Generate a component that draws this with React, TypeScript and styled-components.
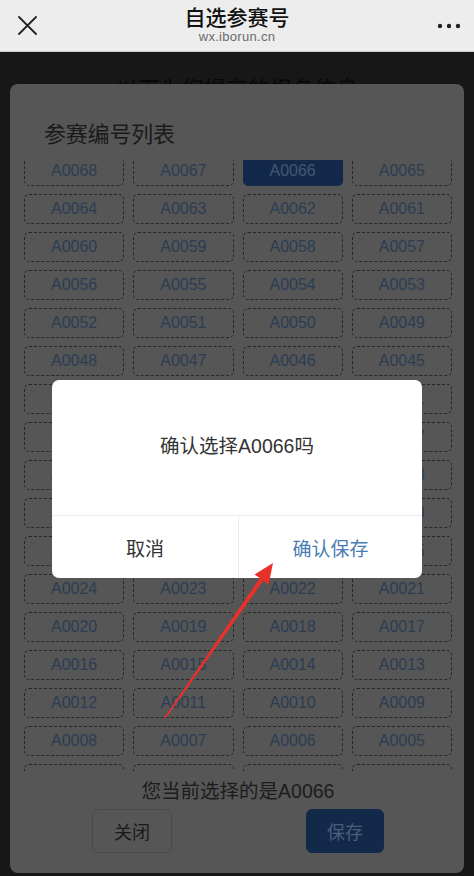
import React from 'react';
import styled, { createGlobalStyle } from 'styled-components';

const GlobalStyle = createGlobalStyle`
    html, body {
        margin: 0;
        padding: 0;
        height: 100%;
        background: #171717;
    }
    body {
        font-family: "Liberation Sans", "Noto Sans CJK SC", sans-serif;
    }
    #root {
        height: 100%;
    }
`;

const Page = styled.div`
    width: 474px;
    height: 876px;
    display: flex;
    flex-direction: column;
    overflow: hidden;
    position: relative;
`;

/* WeChat style top bar */
const TopBar = styled.div`
    height: 51px;
    flex: none;
    background: #ededed;
    border-bottom: 1px solid #c9c9c9;
    display: grid;
    grid-template-columns: 60px 1fr 60px;
    align-items: center;
`;

const BarButton = styled.div<{ $align: 'left' | 'right' }>`
    display: flex;
    justify-content: ${p => (p.$align === 'left' ? 'flex-start' : 'flex-end')};
    padding: ${p => (p.$align === 'left' ? '0 0 0 18px' : '0 13px 0 0')};
`;

const TitleBlock = styled.div`
    display: flex;
    flex-direction: column;
    align-items: center;
`;

const PageTitle = styled.div`
    font-family: "Noto Sans CJK SC", sans-serif;
    font-size: 21px;
    font-weight: 500;
    line-height: 26px;
    color: #111;
    margin-top: -4px;
`;

const PageHost = styled.div`
    font-size: 13px;
    line-height: 15px;
    color: #6a6a6a;
    letter-spacing: 0.3px;
`;

/* everything below the bar, dimmed by the open modals */
const Stage = styled.div`
    flex: 1;
    position: relative;
    background: #171717;
    padding-top: 20px;
`;

const BehindText = styled.div`
    text-align: center;
    font-family: "Noto Sans CJK SC", sans-serif;
    font-size: 22px;
    line-height: 30px;
    color: #070707;
`;

const ListPanel = styled.div`
    position: absolute;
    left: 10px;
    right: 10px;
    top: 32px;
    height: 789px;
    background: #565656;
    border-radius: 8px;
    padding: 33px 12px 0 14px;
    box-sizing: border-box;
    display: flex;
    flex-direction: column;
`;

const PanelTitle = styled.div`
    font-family: "Noto Sans CJK SC", sans-serif;
    font-size: 22px;
    line-height: 30px;
    color: #1a1a1a;
    padding-left: 20px;
    letter-spacing: -0.2px;
`;

const ScrollArea = styled.div`
    margin-top: 13px;
    height: 611px;
    overflow: hidden;
`;

/* list is scrolled a few pixels down */
const NumberGrid = styled.div`
    margin-top: -4px;
    display: grid;
    grid-template-columns: repeat(4, 1fr);
    column-gap: 9px;
    row-gap: 8px;
`;

const NumberCell = styled.div<{ $selected?: boolean }>`
    height: 30px;
    box-sizing: border-box;
    border-radius: 5px;
    border: 1px ${p => (p.$selected ? 'solid #13294a' : 'dashed #262626')};
    background: ${p => (p.$selected ? '#13294a' : 'transparent')};
    color: ${p => (p.$selected ? '#415873' : '#2c3d53')};
    font-size: 16px;
    display: flex;
    align-items: center;
    justify-content: center;
`;

const CurrentChoice = styled.div`
    margin-top: 8px;
    text-align: center;
    font-size: 19.5px;
    line-height: 24px;
    color: #1c1c1c;
`;

const ButtonRow = styled.div`
    margin-top: 6px;
    display: flex;
    justify-content: space-between;
    padding: 0 68px 0 68px;
`;

const PanelButton = styled.div<{ $primary?: boolean }>`
    width: ${p => (p.$primary ? '78px' : '80px')};
    height: 44px;
    box-sizing: border-box;
    border-radius: 6px;
    border: 1px solid ${p => (p.$primary ? '#13294a' : '#4b4b4b')};
    background: ${p => (p.$primary ? '#13294a' : 'transparent')};
    color: ${p => (p.$primary ? '#4a5f7a' : '#1a1a1a')};
    font-family: "Noto Sans CJK SC", sans-serif;
    font-size: 18px;
    display: flex;
    align-items: center;
    justify-content: center;
`;

/* confirm dialog on top of the list */
const ConfirmBox = styled.div`
    position: absolute;
    left: 52px;
    top: 328px;
    width: 370px;
    height: 198px;
    background: #fff;
    border-radius: 7px;
    display: flex;
    flex-direction: column;
    overflow: hidden;
`;

const ConfirmMessage = styled.div`
    height: 136px;
    display: flex;
    align-items: center;
    justify-content: center;
    padding-bottom: 6px;
    box-sizing: border-box;
    font-size: 19.5px;
    color: #333;
    border-bottom: 1px solid #ececec;
`;

const ConfirmActions = styled.div`
    flex: 1;
    display: grid;
    grid-template-columns: 186px 1fr;
`;

const ConfirmAction = styled.div<{ $accent?: boolean }>`
    display: flex;
    align-items: center;
    justify-content: center;
    font-family: "Noto Sans CJK SC", sans-serif;
    font-size: 19px;
    color: ${p => (p.$accent ? '#4a7db3' : '#333')};
    & + & {
        border-left: 1px solid #ececec;
    }
`;

const ArrowLayer = styled.svg`
    position: absolute;
    left: 0;
    top: 0;
    pointer-events: none;
`;

const CloseIcon = () => (
    <svg width="19" height="19" viewBox="0 0 19 19">
        <path d="M1 1 L18 18 M18 1 L1 18" stroke="#222" strokeWidth="1.8" strokeLinecap="round" />
    </svg>
);

const MoreIcon = () => (
    <svg width="24" height="6" viewBox="0 0 24 6">
        <circle cx="3" cy="3" r="2.2" fill="#222" />
        <circle cx="12" cy="3" r="2.2" fill="#222" />
        <circle cx="21" cy="3" r="2.2" fill="#222" />
    </svg>
);

const numbers: string[] = [];
for (let n = 68; n >= 1; n--) {
    numbers.push('A' + String(n).padStart(4, '0'));
}

const selected = 'A0066';

export default function App() {
    return <Page>
        <GlobalStyle />
        <TopBar>
            <BarButton $align="left"><CloseIcon /></BarButton>
            <TitleBlock>
                <PageTitle>自选参赛号</PageTitle>
                <PageHost>wx.iborun.cn</PageHost>
            </TitleBlock>
            <BarButton $align="right"><MoreIcon /></BarButton>
        </TopBar>

        <Stage>
            <BehindText>以下为您提交的报名信息</BehindText>

            <ListPanel>
                <PanelTitle>参赛编号列表</PanelTitle>
                <ScrollArea>
                    <NumberGrid>
                        {numbers.map(num =>
                            <NumberCell key={num} $selected={num === selected}>{num}</NumberCell>
                        )}
                    </NumberGrid>
                </ScrollArea>
                <CurrentChoice>您当前选择的是{selected}</CurrentChoice>
                <ButtonRow>
                    <PanelButton>关闭</PanelButton>
                    <PanelButton $primary>保存</PanelButton>
                </ButtonRow>
            </ListPanel>

            <ConfirmBox>
                <ConfirmMessage>确认选择{selected}吗</ConfirmMessage>
                <ConfirmActions>
                    <ConfirmAction>取消</ConfirmAction>
                    <ConfirmAction $accent>确认保存</ConfirmAction>
                </ConfirmActions>
            </ConfirmBox>
        </Stage>

        {/* red annotation arrow */}
        <ArrowLayer width="474" height="876" viewBox="0 0 474 876">
            <polygon
                points="273,563 268.5,585 263.4,580.6 165.6,718.4 164.4,717.6 259.8,578.1 254.5,574.6"
                fill="#e9302a"
            />
        </ArrowLayer>
    </Page>;
}
